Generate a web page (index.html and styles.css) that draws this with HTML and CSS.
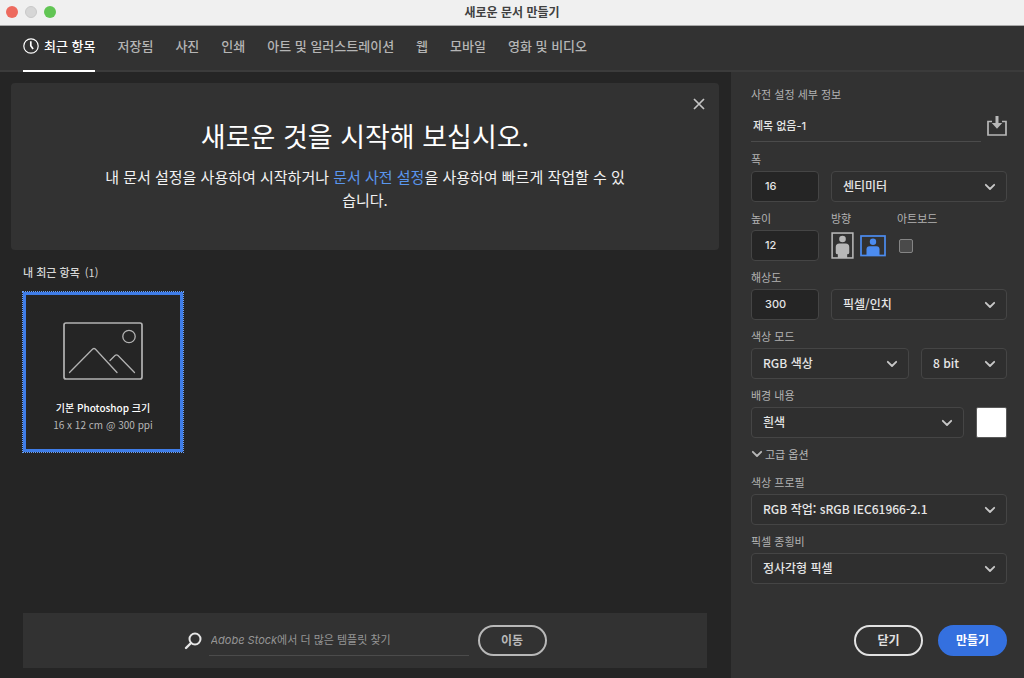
FILE: index.html
```html
<!DOCTYPE html>
<html lang="ko">
<head>
<meta charset="utf-8">
<meta name="viewport" content="width=device-width, initial-scale=1">
<title>새로운 문서 만들기</title>
<link rel="stylesheet" href="styles.css">
</head>
<body>
<svg class="defs" aria-hidden="true">
  <symbol id="chevron" viewBox="0 0 12 8"><path d="M1.8 1.8 6 6l4.200-4.200" fill="none" stroke="currentColor" stroke-width="1.800" stroke-linecap="round" stroke-linejoin="round"/></symbol>
</svg>
<div class="window">
  <header class="titlebar">
    <div class="lights"><span class="light light-close"></span><span class="light light-min"></span><span class="light light-max"></span></div>
    <h1 class="window-title">새로운 문서 만들기</h1>
  </header>

  <nav class="tabs">
    <button class="tab tab-active" type="button">
      <svg class="clock" viewBox="0 0 16 16" aria-hidden="true"><circle cx="8" cy="8" r="7.200" fill="none" stroke="currentColor" stroke-width="1.200"/><path d="M7.800 3.200v4.600l2.300 3.200" fill="none" stroke="currentColor" stroke-width="1.700"/></svg>
      최근 항목
    </button>
    <button class="tab" type="button">저장됨</button>
    <button class="tab" type="button">사진</button>
    <button class="tab" type="button">인쇄</button>
    <button class="tab" type="button">아트 및 일러스트레이션</button>
    <button class="tab" type="button">웹</button>
    <button class="tab" type="button">모바일</button>
    <button class="tab" type="button">영화 및 비디오</button>
  </nav>

  <div class="content">
    <main class="browse">
      <section class="banner">
        <button class="banner-close" type="button" aria-label="배너 닫기"><svg viewBox="0 0 12 12" aria-hidden="true"><path d="M1 1l10 10M11 1 1 11" stroke="currentColor" stroke-width="1.700"/></svg></button>
        <h2 class="banner-title">새로운 것을 시작해 보십시오.</h2>
        <p class="banner-text">내 문서 설정을 사용하여 시작하거나 <a class="banner-link" href="#">문서 사전 설정</a>을 사용하여 빠르게 작업할 수 있습니다.</p>
      </section>

      <section class="recent">
        <h3 class="recent-title">내 최근 항목 <span class="count">(1)</span></h3>
        <button class="preset" type="button">
          <svg class="preset-icon" viewBox="0 0 80 58" aria-hidden="true" fill="none" stroke="currentColor">
            <rect x="1" y="1" width="78" height="56" rx="2" stroke-width="1.700"/>
            <circle cx="66" cy="14.500" r="6.200" stroke-width="1.300"/>
            <path d="M6.500 50.500 29.700 27q1.300-1 2.600 0l21.700 23.500M47 38.500l5-5q1.500-1.300 3 0l16.500 17" stroke-width="1.300" stroke-linecap="round"/>
          </svg>
          <span class="preset-name">기본 Photoshop 크기</span>
          <span class="preset-size">16 x 12 cm @ 300 ppi</span>
        </button>
      </section>

      <form class="stock">
        <svg class="search-icon" viewBox="0 0 18 18" aria-hidden="true"><circle cx="11" cy="7" r="5.500" fill="none" stroke="currentColor" stroke-width="2"/><path d="M7 11 2 16" stroke="currentColor" stroke-width="2.400" stroke-linecap="round"/></svg>
        <input class="stock-input" type="search" aria-label="Adobe Stock 템플릿 검색" placeholder="Adobe Stock에서 더 많은 템플릿 찾기">
        <button class="pill pill-muted" type="button">이동</button>
      </form>
    </main>

    <aside class="details">
      <form class="details-form">
        <div class="name-block">
          <label class="label" for="name">사전 설정 세부 정보</label>
          <div class="name-row">
            <input class="name-input" id="name" type="text" value="제목 없음-1">
            <button class="save" type="button" aria-label="사전 설정 저장"><svg viewBox="0 0 20 20" aria-hidden="true"><path d="M5 5.500H1V19h18V5.500h-4" fill="none" stroke="currentColor" stroke-width="1.700"/><path d="M8.500 0h3v7h3.700L10 12.700 4.800 7h3.700z" fill="currentColor"/></svg></button>
          </div>
        </div>

        <div class="row">
          <div class="field field-num"><label class="label" for="width">폭</label><input class="number" id="width" type="text" value="16"></div>
          <div class="field field-end"><span class="select"><select id="unit" aria-label="단위"><option>센티미터</option></select><svg class="chevron" aria-hidden="true"><use href="#chevron"/></svg></span></div>
        </div>

        <div class="row">
          <div class="field field-num"><label class="label" for="height">높이</label><input class="number" id="height" type="text" value="12"></div>
          <div class="field field-orient">
            <span class="label" id="orient-label">방향</span>
            <div class="orient" role="group" aria-labelledby="orient-label">
              <button class="orient-btn" type="button" aria-label="세로"><svg class="portrait" viewBox="0 0 22 26" aria-hidden="true"><rect x="1" y="1" width="20" height="24" fill="none" stroke="currentColor" stroke-width="1.500"/><circle cx="11" cy="6.700" r="3.200" fill="currentColor"/><path d="M8 11h6q3.500 0 3.500 3.500V20q0 1.500-2 1.500V25h-9v-3.500q-2 0-2-1.500v-5.500Q4.500 11 8 11z" fill="currentColor"/></svg></button>
              <button class="orient-btn orient-on" type="button" aria-label="가로" aria-pressed="true"><svg class="landscape" viewBox="0 0 26 22" aria-hidden="true"><rect x="1" y="1" width="24" height="19.500" fill="none" stroke="currentColor" stroke-width="1.700"/><circle cx="13" cy="6.800" r="3.200" fill="currentColor"/><path d="M9.500 11.300h7q3 0 3 3V20h-13v-5.700q0-3 3-3z" fill="currentColor"/></svg></button>
            </div>
          </div>
          <div class="field"><label class="label" for="artboard">아트보드</label><span class="check-cell"><input class="check" id="artboard" type="checkbox"></span></div>
        </div>

        <div class="row">
          <div class="field field-num"><label class="label" for="res">해상도</label><input class="number" id="res" type="text" value="300"></div>
          <div class="field field-end"><span class="select"><select aria-label="해상도 단위"><option>픽셀/인치</option></select><svg class="chevron" aria-hidden="true"><use href="#chevron"/></svg></span></div>
        </div>

        <div class="row">
          <div class="field field-end"><label class="label" for="mode">색상 모드</label><span class="select"><select id="mode"><option>RGB 색상</option></select><svg class="chevron" aria-hidden="true"><use href="#chevron"/></svg></span></div>
          <div class="field field-depth"><span class="select"><select aria-label="비트 심도"><option>8 bit</option></select><svg class="chevron" aria-hidden="true"><use href="#chevron"/></svg></span></div>
        </div>

        <div class="row">
          <div class="field field-end"><label class="label" for="bg">배경 내용</label><span class="select"><select id="bg"><option>흰색</option></select><svg class="chevron" aria-hidden="true"><use href="#chevron"/></svg></span></div>
          <button class="swatch" type="button" aria-label="배경색"></button>
        </div>

        <button class="advanced" type="button" aria-expanded="true"><svg class="chevron" aria-hidden="true"><use href="#chevron"/></svg>고급 옵션</button>

        <div class="field"><label class="label" for="profile">색상 프로필</label><span class="select"><select id="profile"><option>RGB 작업: sRGB IEC61966-2.1</option></select><svg class="chevron" aria-hidden="true"><use href="#chevron"/></svg></span></div>
        <div class="field"><label class="label" for="ratio">픽셀 종횡비</label><span class="select"><select id="ratio"><option>정사각형 픽셀</option></select><svg class="chevron" aria-hidden="true"><use href="#chevron"/></svg></span></div>
      </form>
      <div class="actions">
        <button class="pill" type="button">닫기</button>
        <button class="pill pill-primary" type="button">만들기</button>
      </div>
    </aside>
  </div>
</div>
</body>
</html>
```
FILE: styles.css
```css
* { box-sizing: border-box; }

body {
  margin: 0;
  background: #252525;
  color: #e6e6e6;
  font: 13px/16px "Noto Sans CJK KR", sans-serif;
}

h1, h2, h3, p { margin: 0; }

button, input, select {
  margin: 0;
  padding: 0;
  border: 0;
  background: none;
  color: inherit;
  font: inherit;
  appearance: none;
}

svg { display: block; }
.defs { display: none; }

.window {
  display: flex;
  flex-direction: column;
  min-height: 100vh;
}

/* Title bar */
.titlebar {
  display: grid;
  grid-template-columns: 1fr auto 1fr;
  align-items: center;
  height: 26px;
  padding: 0 6px 1px;
  background: #f0f0f0;
  border-bottom: 1px solid #a8a8a8;
}
.lights { display: flex; gap: 7px; }
.light {
  width: 12px;
  height: 12px;
  border-radius: 50%;
}
.light-close { background: #ed6a5e; }
.light-min { background: #d6d6d6; border: 1px solid #c9c9c9; }
.light-max { background: #61c554; }
.window-title {
  color: #404040;
  font-size: 12px;
  font-weight: 700;
}

/* Category tabs */
.tabs {
  display: flex;
  gap: 22px;
  height: 46px;
  padding: 0 23px;
  background: #323232;
  border-bottom: 2px solid #3b3b3b;
}
.tab {
  display: flex;
  align-items: center;
  gap: 5px;
  height: 46px;
  padding-bottom: 4px;
  border-bottom: 2px solid transparent;
  color: #b5b5b5;
  font-weight: 500;
}
.tab-active {
  border-color: #ffffff;
  color: #ffffff;
}
.clock { width: 16px; height: 16px; }

.content {
  display: grid;
  grid-template-columns: 1fr 293px;
  flex: 1;
}

/* Left side */
.browse {
  display: flex;
  flex-direction: column;
  padding: 11px 12px 10px 11px;
}
.banner {
  position: relative;
  padding: 35px 94px 39px;
  background: #323232;
  border-radius: 4px;
  text-align: center;
}
.banner-close {
  position: absolute;
  top: 12px;
  right: 11px;
  padding: 3px;
  color: #c4c4c4;
}
.banner-close svg { width: 12px; height: 12px; }
.banner-title {
  color: #ffffff;
  font-size: 27px;
  font-weight: 400;
  line-height: 36px;
}
.banner-text {
  margin-top: 11px;
  color: #f2f2f2;
  font-size: 15px;
  line-height: 23px;
}
.banner-link {
  color: #5a96ee;
  text-decoration: none;
}

.recent { padding: 14px 12px; }
.recent-title {
  color: #d6d6d6;
  font-size: 11px;
  font-weight: 500;
}
.count { margin-left: 2px; font-weight: 400; }
.preset {
  display: flex;
  flex-direction: column;
  align-items: center;
  width: 160px;
  height: 160px;
  margin-top: 12px;
  padding-top: 27px;
  border: 3px solid #3f7de8;
  outline: 1px dotted #6aa0f5;
}
.preset-icon { width: 80px; height: 58px; color: #b3b3b3; }
.preset-name {
  margin-top: 20px;
  color: #ffffff;
  font-size: 10px;
  font-weight: 500;
}
.preset-size {
  margin-top: 1px;
  color: #b8b8b8;
  font-size: 10px;
}

.stock {
  display: flex;
  align-items: center;
  justify-content: center;
  height: 55px;
  margin: auto 12px 0;
  background: #323232;
}
.search-icon { width: 18px; height: 18px; color: #e6e6e6; }
.stock-input {
  width: 260px;
  height: 31px;
  margin: 0 9px 0 7px;
  padding: 0 2px 1px;
  border-bottom: 1px solid #4b4b4b;
  font: italic 11px/16px Inter, "Noto Sans CJK KR", sans-serif;
  font-synthesis: none;
}
.stock-input::placeholder { color: #959595; opacity: 1; }

.pill {
  width: 69px;
  height: 31px;
  padding-bottom: 2px;
  border: 2px solid #e2e2e2;
  border-radius: 16px;
  color: #e2e2e2;
  font-size: 12px;
  font-weight: 700;
}
.pill-muted { border-color: #b8b8b8; color: #b8b8b8; }
.pill-primary {
  background: #3470df;
  border-color: #3470df;
  color: #ffffff;
}

/* Preset details */
.details {
  display: flex;
  flex-direction: column;
  justify-content: space-between;
  padding: 14px 17px 22px 20px;
  background: #323232;
}
.details-form {
  display: flex;
  flex-direction: column;
  gap: 8px;
}
.label {
  color: #b3b3b3;
  font-size: 11px;
}
.name-block { padding-bottom: 1px; }
.name-row {
  display: flex;
  align-items: center;
  justify-content: space-between;
  gap: 6px;
  margin-top: 8px;
}
.name-input {
  flex: 1;
  min-width: 0;
  height: 32px;
  padding: 0 2px 2px;
  border-bottom: 1px solid #4b4b4b;
  font: 500 11px/16px Inter, "Noto Sans CJK KR", sans-serif;
}
.save { color: #b8b8b8; }
.save svg { width: 20px; height: 20px; }

.row {
  display: flex;
  align-items: flex-end;
  gap: 12px;
}
.field {
  display: flex;
  flex-direction: column;
  gap: 4px;
}
.field-num { width: 68px; }
.field-end { flex: 1; min-width: 0; }
.field-orient { width: 54px; }
.field-depth { width: 86px; }

.number {
  width: 100%;
  height: 31px;
  padding: 0 13px 1px;
  background: #252525;
  border: 1px solid #454545;
  border-radius: 4px;
  font: 500 11px/16px Inter, sans-serif;
}
.select {
  display: grid;
  align-items: center;
  color: #c8c8c8;
}
.select select {
  grid-area: 1 / 1;
  width: 100%;
  height: 31px;
  padding: 0 28px 2px 11px;
  background: #2f2f2f;
  border: 1px solid #454545;
  border-radius: 4px;
  color: #e6e6e6;
  font-size: 12px;
  font-weight: 500;
}
.chevron { width: 12px; height: 8px; }
.select .chevron {
  grid-area: 1 / 1;
  justify-self: end;
  margin-right: 11px;
  pointer-events: none;
}

.orient {
  display: flex;
  align-items: center;
  gap: 6px;
  height: 31px;
}
.orient-btn { color: #b8b8b8; }
.orient-on { color: #4c8cf0; }
.portrait { width: 23px; height: 27px; }
.landscape { width: 26px; height: 22px; }

.check-cell {
  display: flex;
  align-items: center;
  height: 31px;
  padding-left: 2px;
}
.check {
  width: 14px;
  height: 14px;
  background: #4a4a4a;
  border: 1px solid #858585;
  border-radius: 2px;
}
.swatch {
  width: 31px;
  height: 31px;
  background: #ffffff;
  border: 1px solid #5a5a5a;
  border-radius: 2px;
}
.advanced {
  display: flex;
  align-items: center;
  align-self: flex-start;
  gap: 2px;
  height: 20px;
  padding-bottom: 5px;
  color: #b8b8b8;
  font-size: 11px;
}
.actions {
  display: flex;
  justify-content: flex-end;
  gap: 15px;
}
```
